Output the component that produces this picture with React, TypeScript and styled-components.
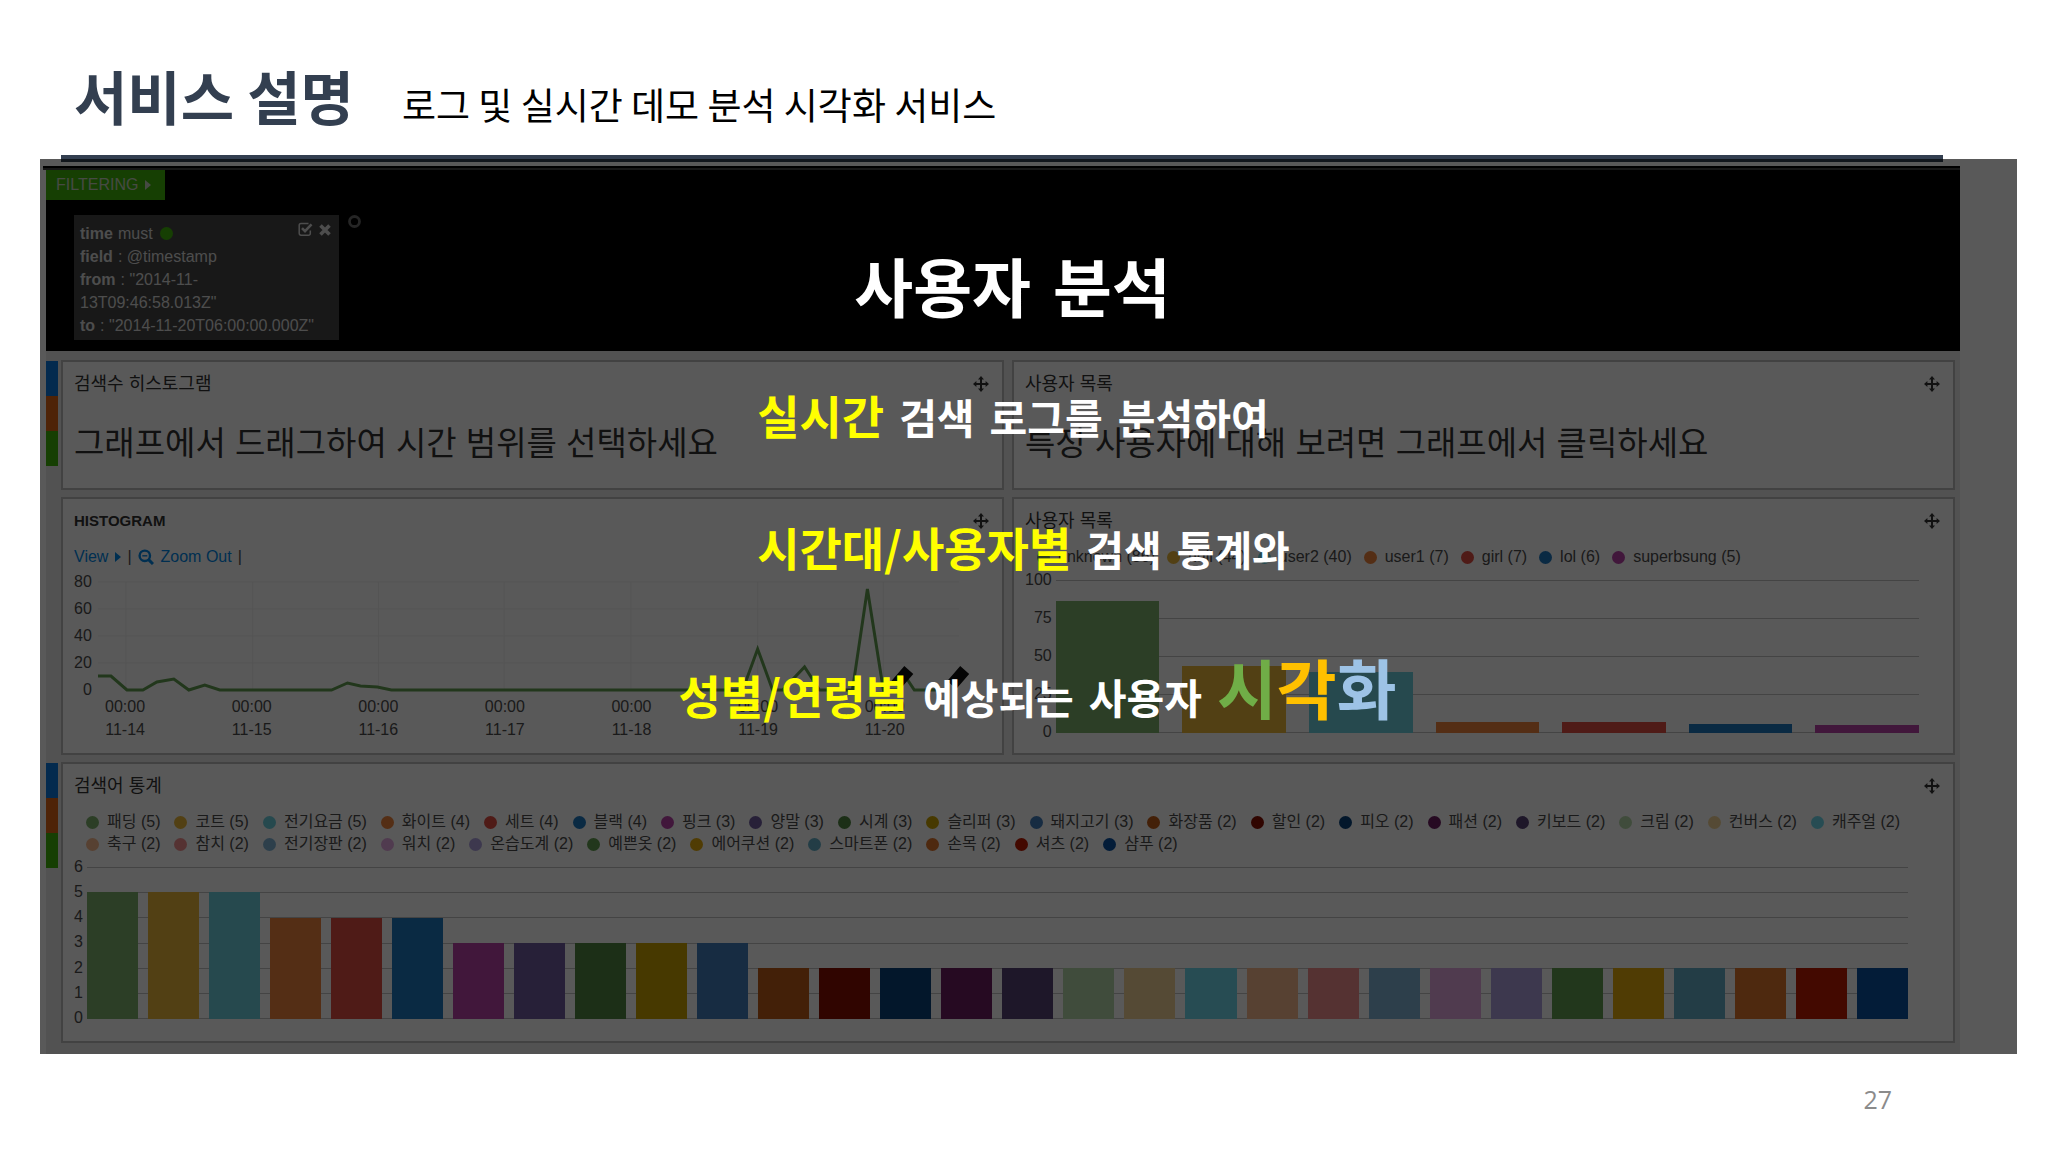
import React from "react";
import styled, { createGlobalStyle } from "styled-components";

const SANS = '"Liberation Sans", "Noto Sans CJK KR", sans-serif';
const KOREAN = '"Noto Sans CJK KR", "Noto Sans", sans-serif';

const GlobalStyle = createGlobalStyle`
  * { box-sizing: border-box; }
  body { margin: 0; background: #fff; font-family: ${KOREAN}; }
  h1, h2, h3, p, ul, dl, dd { margin: 0; padding: 0; font-weight: inherit; font-size: inherit; }
  button { border: 0; margin: 0; font: inherit; cursor: pointer; }
`;

const Slide = styled.main`
  display: flex;
  flex-direction: column;
  min-height: 100vh;
`;

const SlideHeader = styled.header`
  display: flex;
  align-items: baseline;
  gap: 48px;
  height: 155px;
  padding: 51px 74px 0;
`;

const SlideTitle = styled.h1`
  color: #333f50;
  font-size: 58px;
  font-weight: 700;
  line-height: 88px;
`;

const SlideSubtitle = styled.p`
  color: #000;
  font-size: 37px;
  line-height: 56px;
`;

const Rule = styled.div`
  height: 7px;
  margin: 0 105px 0 61px;
  background: #333f50;
`;

const Stage = styled.section`
  position: relative;
  margin: -3px 31px 0 40px;
  padding: 7px 57px 0 6px;
`;

const Scrim = styled.div`
  position: absolute;
  inset: 0;
  display: flex;
  flex-direction: column;
  align-items: center;
  padding-top: 77px;
  background: rgba(0, 0, 0, 0.65);
  color: #fff;
  font-weight: 700;
`;

const ScrimTitle = styled.h2`
  display: flex;
  gap: 22px;
  padding-right: 32px;
  font-size: 64px;
  line-height: 96px;
`;

const Caption = styled.div`
  display: flex;
  flex-direction: column;
  padding: 17px 10px 0 0;
`;

const CaptionLine = styled.p`
  display: flex;
  align-items: baseline;
  gap: 15px;
  font-size: 41px;
  line-height: 130px;
  white-space: nowrap;
`;

const WideLine = styled(CaptionLine)`
  padding-left: 18px;
  line-height: 146px;
`;

const Key = styled.em`
  color: #ff0;
  font-size: 46px;
  font-style: normal;
`;

const Big = styled.strong`
  font-size: 65px;
  font-weight: 700;
`;

const Tint = styled.span<{ $color: string }>`
  color: ${(p) => p.$color};
`;

const Dashboard = styled.div`
  background: #ebebeb;
  color: #4c4c4c;
  font-family: ${SANS};
  font-size: 16px;
`;

const TopStrip = styled.div`
  height: 4px;
  margin-left: -3px;
  background: #000;
  border-bottom: 2px solid #444;
`;

const FilterBar = styled.div`
  height: 181px;
  background: #000;
`;

const FilterToggle = styled.button`
  display: flex;
  align-items: center;
  gap: 7px;
  height: 30px;
  padding: 0 14px 0 10px;
  background: #40b40a;
  color: #c8d4c0;
`;

const Caret = styled.span`
  border: 5px solid transparent;
  border-left: 6px solid currentColor;
  border-right: 0;
`;

const FilterList = styled.div`
  display: flex;
  align-items: flex-start;
  gap: 9px;
  padding: 15px 29px 0 28px;
`;

const FilterCard = styled.div`
  display: flex;
  justify-content: space-between;
  width: 265px;
  height: 125px;
  padding: 7px 8px 0 6px;
  background: #464646;
  color: #dcdcdc;
  line-height: 23px;
  white-space: nowrap;
`;

const FilterFields = styled.dl`
  width: 0;
  dt { float: left; clear: left; margin-right: 5px; font-weight: 700; }
  dd { display: flex; align-items: center; gap: 7px; }
`;

const FilterActions = styled.div`
  display: flex;
  gap: 6px;
  align-items: center;
  height: 15px;
`;

const IconButton = styled.button`
  display: flex;
  padding: 0;
  background: none;
  color: inherit;
`;

const Dot = styled.span<{ $color: string }>`
  flex: none;
  width: 13px;
  height: 13px;
  border-radius: 50%;
  background: ${(p) => p.$color};
`;

const Rows = styled.div`
  display: flex;
  flex-direction: column;
  gap: 7px;
  padding: 9px 5px 11px 0;
`;

const Row = styled.div`
  display: grid;
  grid-template-columns: 12px minmax(0, 1fr);
  gap: 3px;
`;

const Tabs = styled.div`
  display: flex;
  flex-direction: column;
  padding-top: 1px;
`;

const Tab = styled.button<{ $color: string }>`
  height: 35px;
  padding: 0;
  background: ${(p) => p.$color};
`;

const Panels = styled.div<{ $columns: number }>`
  display: grid;
  grid-template-columns: repeat(${(p) => p.$columns}, minmax(0, 1fr));
  gap: 7px 8px;
`;

const PanelBox = styled.section<{ $height: number }>`
  height: ${(p) => p.$height}px;
  padding: 11px 13px 0 11px;
  background: #fff;
  border: 2px solid #bcbcbc;
`;

const PanelHead = styled.header`
  display: flex;
  justify-content: space-between;
  align-items: center;
  height: 22px;
  color: #333;
`;

const PanelTitle = styled.h3<{ $latin?: boolean }>`
  font-size: ${(p) => (p.$latin ? 15 : 18)}px;
  font-weight: ${(p) => (p.$latin ? 700 : 400)};
  line-height: 22px;
`;

const Hint = styled.p`
  padding-top: 25px;
  color: #333;
  font-size: 33px;
  line-height: 48px;
  white-space: nowrap;
`;

const Tools = styled.div`
  display: flex;
  align-items: center;
  gap: 6px;
  height: 27px;
  margin-top: 11px;
  line-height: 27px;
`;

const ToolLink = styled.a`
  display: flex;
  align-items: center;
  gap: 7px;
  color: #0088e8;
  text-decoration: none;
`;

const Legend = styled.ul<{ $gap: number }>`
  display: flex;
  flex-wrap: wrap;
  column-gap: ${(p) => p.$gap}px;
  margin-top: 14px;
  padding-left: 12px;
  list-style: none;
`;

const LegendItem = styled.li`
  display: flex;
  align-items: center;
  gap: 8px;
  height: 22px;
  line-height: 22px;
  white-space: nowrap;
`;

const Chart = styled.div<{ $right: number; $gap: number }>`
  display: flex;
  gap: ${(p) => p.$gap}px;
  margin-top: 2px;
  padding-right: ${(p) => p.$right}px;
`;

const YAxis = styled.div<{ $height: number }>`
  display: flex;
  flex-direction: column;
  justify-content: space-between;
  height: ${(p) => p.$height + 20}px;
  line-height: 20px;
  text-align: right;
`;

const PlotColumn = styled.div`
  flex: 1;
  min-width: 0;
  padding-top: 10px;
`;

const Plot = styled.div<{ $height: number; $steps: number; $gap: number }>`
  display: flex;
  align-items: flex-end;
  gap: ${(p) => p.$gap}px;
  height: ${(p) => p.$height + 1}px;
  background: linear-gradient(#c4c4c4, #c4c4c4) 0 0 / 100% 1px no-repeat,
    repeating-linear-gradient(
      to top,
      #c4c4c4 0 1px,
      transparent 1px calc((100% - 1px) / ${(p) => p.$steps})
    );
`;

const Bar = styled.span<{ $color: string }>`
  flex: 1;
  background: ${(p) => p.$color};
`;

const LinePlot = styled.svg`
  display: block;
  width: 100%;
  height: 108px;
  overflow: visible;
`;

const XAxis = styled.div`
  display: grid;
  grid-template-columns: repeat(7, 1fr);
  margin: 5px 20px 0 -36px;
  line-height: 23px;
  text-align: center;
`;

const SlideFooter = styled.footer`
  padding: 27px 156px 0 0;
  color: #8b8b8b;
  font-family: "Open Sans", "Noto Sans", sans-serif;
  font-size: 25px;
  line-height: 36px;
  text-align: right;
`;

const MoveIcon = () => (
  <svg width="16" height="16" viewBox="0 0 16 16" fill="currentColor" aria-hidden="true">
    <path d="M8 0l3 3.4H9v3.6h3.6V5L16 8l-3.4 3V9H9v3.6h2L8 16l-3-3.4h2V9H3.4v2L0 8l3.4-3v2H7V3.4H5z" />
  </svg>
);

const CheckIcon = () => (
  <svg width="15" height="15" viewBox="0 0 15 15" fill="none" stroke="currentColor" aria-hidden="true">
    <path d="M10.5 1.5H3A1.8 1.8 0 0 0 1.2 3.3v8A1.8 1.8 0 0 0 3 13.2h7.5a1.8 1.8 0 0 0 1.8-1.8V8.5" strokeWidth="1.5" />
    <path d="M4 6.2l3 3 6.5-6.8" strokeWidth="2.6" />
  </svg>
);

const CloseIcon = () => (
  <svg width="12" height="12" viewBox="0 0 12 12" stroke="currentColor" strokeWidth="3.6" aria-hidden="true">
    <path d="M1.5 1.5l9 9M10.5 1.5l-9 9" />
  </svg>
);

const AddIcon = () => (
  <svg width="13" height="13" viewBox="0 0 14 14" fill="none" stroke="#6a6a6a" aria-hidden="true">
    <circle cx="7" cy="7" r="5.4" strokeWidth="3" />
  </svg>
);

const ZoomOutIcon = () => (
  <svg width="16" height="16" viewBox="0 0 16 16" fill="none" stroke="currentColor" aria-hidden="true">
    <circle cx="6.8" cy="6.8" r="5.2" strokeWidth="2.4" />
    <path d="M10.6 10.6l4.4 4.4" strokeWidth="3" />
    <path d="M4.3 6.8h5" strokeWidth="1.4" />
  </svg>
);

type Term = [label: string, value: number, color: string];

const USERS: Term[] = [
  ["unknown", 86, "#7EB26D"],
  ["null", 44, "#EAB839"],
  ["user2", 40, "#6ED0E0"],
  ["user1", 7, "#EF843C"],
  ["girl", 7, "#E24D42"],
  ["lol", 6, "#1F78C1"],
  ["superbsung", 5, "#BA43A9"],
];

const TERMS: Term[] = [
  ["패딩", 5, "#7EB26D"],
  ["코트", 5, "#EAB839"],
  ["전기요금", 5, "#6ED0E0"],
  ["화이트", 4, "#EF843C"],
  ["세트", 4, "#E24D42"],
  ["블랙", 4, "#1F78C1"],
  ["핑크", 3, "#BA43A9"],
  ["양말", 3, "#705DA0"],
  ["시계", 3, "#508642"],
  ["슬리퍼", 3, "#CCA300"],
  ["돼지고기", 3, "#447EBC"],
  ["화장품", 2, "#C15C17"],
  ["할인", 2, "#890F02"],
  ["피오", 2, "#0A437C"],
  ["패션", 2, "#6D1F62"],
  ["키보드", 2, "#584477"],
  ["크림", 2, "#B7DBAB"],
  ["컨버스", 2, "#F4D598"],
  ["캐주얼", 2, "#70DBED"],
  ["축구", 2, "#F9BA8F"],
  ["참치", 2, "#F29191"],
  ["전기장판", 2, "#82B5D8"],
  ["워치", 2, "#E5A8E2"],
  ["온습도계", 2, "#AEA2E0"],
  ["예쁜옷", 2, "#629E51"],
  ["에어쿠션", 2, "#E5AC0E"],
  ["스마트폰", 2, "#64B0C8"],
  ["손목", 2, "#E0752D"],
  ["셔츠", 2, "#BF1B00"],
  ["샴푸", 2, "#0A50A1"],
];

const DAYS = ["11-14", "11-15", "11-16", "11-17", "11-18", "11-19", "11-20"];

const Panel = ({
  title,
  height,
  latin,
  children,
}: {
  title: string;
  height: number;
  latin?: boolean;
  children: React.ReactNode;
}) => (
  <PanelBox $height={height}>
    <PanelHead>
      <PanelTitle $latin={latin}>{title}</PanelTitle>
      <IconButton aria-label="패널 이동">
        <MoveIcon />
      </IconButton>
    </PanelHead>
    {children}
  </PanelBox>
);

const RowTabs = () => (
  <Tabs>
    <Tab $color="#0a78e0" aria-label="행 접기" />
    <Tab $color="#e06414" aria-label="행 설정" />
    <Tab $color="#40b40a" aria-label="패널 추가" />
  </Tabs>
);

const TermLegend = ({ terms, gap }: { terms: Term[]; gap: number }) => (
  <Legend $gap={gap}>
    {terms.map(([label, value, color]) => (
      <LegendItem key={label}>
        <Dot $color={color} />
        {label} ({value})
      </LegendItem>
    ))}
  </Legend>
);

const BarChart = ({
  terms,
  ticks,
  height,
  gap,
  right,
}: {
  terms: Term[];
  ticks: number[];
  height: number;
  gap: number;
  right: number;
}) => (
  <Chart $right={right} $gap={4}>
    <YAxis $height={height}>
      {ticks.map((tick) => (
        <span key={tick}>{tick}</span>
      ))}
    </YAxis>
    <PlotColumn>
      <Plot $height={height} $steps={ticks.length - 1} $gap={gap}>
        {terms.map(([label, value, color]) => (
          <Bar key={label} $color={color} style={{ height: `${(value / ticks[0]) * 100}%` }} />
        ))}
      </Plot>
    </PlotColumn>
  </Chart>
);

const Histogram = () => (
  <Chart $right={21} $gap={6}>
    <YAxis $height={108}>
      {[80, 60, 40, 20, 0].map((tick) => (
        <span key={tick}>{tick}</span>
      ))}
    </YAxis>
    <PlotColumn>
      <LinePlot viewBox="0 0 872 108" preserveAspectRatio="none">
        <path
          d="M0 0H863M0 27H863M0 54H863M0 81H863M28 0V108M155 0V108M281 0V108M407 0V108M534 0V108M661 0V108M787 0V108"
          stroke="#f0f0f0"
          fill="none"
        />
        <path
          d="M0 94L13 94L29 108H45L59 100L76 97L91 108L107 103L122 108H234L250 101L263 104L280 105L294 108H646L661 67L676 108H686L708 85L723 108H756L771 7L787 108H802L810 96L818 108H849"
          stroke="#629E51"
          strokeWidth="3"
          fill="none"
        />
        <path d="M808 84L817 92L804 107L795 99zM864 84L873 92L860 107L851 99z" fill="#111" />
      </LinePlot>
      <XAxis>
        {DAYS.map((day) => (
          <span key={day}>
            00:00
            <br />
            {day}
          </span>
        ))}
      </XAxis>
    </PlotColumn>
  </Chart>
);

export default function App() {
  return (
    <Slide>
      <GlobalStyle />
      <SlideHeader>
        <SlideTitle>서비스 설명</SlideTitle>
        <SlideSubtitle>로그 및 실시간 데모 분석 시각화 서비스</SlideSubtitle>
      </SlideHeader>
      <Rule />
      <Stage>
        <Dashboard>
          <TopStrip />
          <FilterBar>
            <FilterToggle>
              FILTERING <Caret />
            </FilterToggle>
            <FilterList>
              <FilterCard>
                <FilterFields>
                  <dt>time</dt>
                  <dd>
                    must <Dot $color="#40b40a" />
                  </dd>
                  <dt>field</dt>
                  <dd>: @timestamp</dd>
                  <dt>from</dt>
                  <dd>: "2014-11-</dd>
                  <dd>13T09:46:58.013Z"</dd>
                  <dt>to</dt>
                  <dd>: "2014-11-20T06:00:00.000Z"</dd>
                </FilterFields>
                <FilterActions>
                  <IconButton aria-label="필터 사용">
                    <CheckIcon />
                  </IconButton>
                  <IconButton aria-label="필터 삭제">
                    <CloseIcon />
                  </IconButton>
                </FilterActions>
              </FilterCard>
              <IconButton aria-label="필터 추가">
                <AddIcon />
              </IconButton>
            </FilterList>
          </FilterBar>
          <Rows>
            <Row>
              <RowTabs />
              <Panels $columns={2}>
                <Panel title="검색수 히스토그램" height={130}>
                  <Hint>그래프에서 드래그하여 시간 범위를 선택하세요</Hint>
                </Panel>
                <Panel title="사용자 목록" height={130}>
                  <Hint>특정 사용자에 대해 보려면 그래프에서 클릭하세요</Hint>
                </Panel>
                <Panel title="HISTOGRAM" height={258} latin>
                  <Tools>
                    <ToolLink href="#view">
                      View <Caret />
                    </ToolLink>
                    <span>|</span>
                    <ToolLink href="#zoom-out">
                      <ZoomOutIcon /> Zoom Out
                    </ToolLink>
                    <span>|</span>
                  </Tools>
                  <Histogram />
                </Panel>
                <Panel title="사용자 목록" height={258}>
                  <TermLegend terms={USERS} gap={12} />
                  <BarChart terms={USERS} ticks={[100, 75, 50, 25, 0]} height={152} gap={23} right={21} />
                </Panel>
              </Panels>
            </Row>
            <Row>
              <RowTabs />
              <Panels $columns={1}>
                <Panel title="검색어 통계" height={281}>
                  <TermLegend terms={TERMS} gap={14} />
                  <BarChart terms={TERMS} ticks={[6, 5, 4, 3, 2, 1, 0]} height={151} gap={10} right={32} />
                </Panel>
              </Panels>
            </Row>
          </Rows>
        </Dashboard>
        <Scrim>
          <ScrimTitle>
            <span>사용자</span> <span>분석</span>
          </ScrimTitle>
          <Caption>
            <CaptionLine>
              <Key>실시간</Key> <span>검색</span> <span>로그를</span> <span>분석하여</span>
            </CaptionLine>
            <CaptionLine>
              <Key>시간대/사용자별</Key> <span>검색</span> <span>통계와</span>
            </CaptionLine>
          </Caption>
          <WideLine>
            <Key>성별/연령별</Key> <span>예상되는</span> <span>사용자</span>
            <Big>
              <Tint $color="#70ad47">시</Tint>
              <Tint $color="#ffc000">각</Tint>
              <Tint $color="#9dc3e6">화</Tint>
            </Big>
          </WideLine>
        </Scrim>
      </Stage>
      <SlideFooter>27</SlideFooter>
    </Slide>
  );
}
